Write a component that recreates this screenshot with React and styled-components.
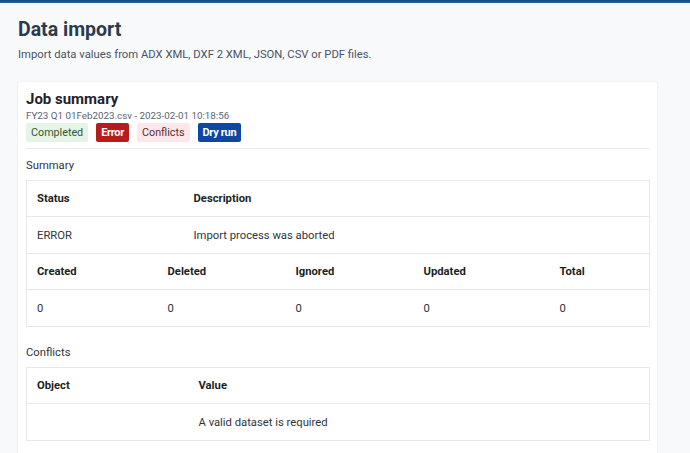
import React from "react";
import styled, { createGlobalStyle } from "styled-components";

const GlobalStyle = createGlobalStyle`
  html, body {
    margin: 0;
    padding: 0;
    background: #f8f9fb;
    font-family: Roboto, "Liberation Sans", sans-serif;
  }
`;

const TopBar = styled.div`
  height: 3px;
  background: linear-gradient(#1b4a78, #2c6398);
`;

const Page = styled.div`
  padding: 15px 33px 0 18px;
`;

const Title = styled.h1`
  margin: 0;
  font-size: 19.5px;
  line-height: 24px;
  font-weight: 700;
  color: #2c3a4d;
`;

const Subtitle = styled.p`
  margin: 6px 0 20px;
  font-size: 11.25px;
  line-height: 14px;
  color: #4a5463;
`;

const Card = styled.div`
  background: #fff;
  border-radius: 3px;
  box-shadow: 0 0 2px rgba(0, 0, 0, 0.12);
  padding: 8px 7px 20px 8px;
`;

const CardTitle = styled.h2`
  margin: 0;
  font-size: 15px;
  line-height: 18px;
  font-weight: 700;
  color: #1f2329;
`;

const FileLine = styled.div`
  margin-top: 2px;
  font-size: 9.8px;
  line-height: 12px;
  color: #5b6470;
`;

const Badges = styled.div`
  display: flex;
  gap: 8px;
  margin-top: 1px;
`;

const badgeColors = {
  completed: { bg: "#e6f4e7", fg: "#2f5a32", weight: 400 },
  error: { bg: "#b71c1c", fg: "#fff", weight: 700 },
  conflicts: { bg: "#fde7ea", fg: "#5e2a2e", weight: 400 },
  dry: { bg: "#0d47a1", fg: "#fff", weight: 700 },
};

const Badge = styled.span`
  display: inline-flex;
  align-items: center;
  height: 19px;
  padding: 0 5px;
  border-radius: 2px;
  background: ${(p) => badgeColors[p.$kind].bg};
  color: ${(p) => badgeColors[p.$kind].fg};
  font-weight: ${(p) => badgeColors[p.$kind].weight};
  font-size: ${(p) => (badgeColors[p.$kind].weight === 700 ? "11px" : "10.75px")};
  letter-spacing: ${(p) => (badgeColors[p.$kind].weight === 700 ? "-0.3px" : "0")};
`;

const Divider = styled.hr`
  border: 0;
  border-top: 1px solid #e8eaee;
  margin: 6px 0 0;
`;

const SectionTitle = styled.h3`
  margin: ${(p) => (p.$first ? "10px 0 7px" : "19px 0 7px")};
  font-size: 11.25px;
  line-height: 14px;
  font-weight: 400;
  color: #2e3440;
`;

const Table = styled.table`
  width: 100%;
  border-collapse: collapse;
  table-layout: fixed;
  border: 1px solid #e6e8eb;
  border-top: ${(p) => (p.$joined ? "none" : "1px solid #e6e8eb")};
  font-size: 11.25px;
`;

const Th = styled.th`
  text-align: left;
  font-weight: 700;
  color: #1c1f24;
  height: 35px;
  padding: 0 10px;
  border-bottom: 1px solid #e6e8eb;
`;

const Td = styled.td`
  color: #30353c;
  height: 36px;
  padding: 0 10px;
  border-bottom: 1px solid #e6e8eb;
`;

export default function App() {
  return (
    <>
      <GlobalStyle />
      <TopBar />
      <Page>
        <Title>Data import</Title>
        <Subtitle>
          Import data values from ADX XML, DXF 2 XML, JSON, CSV or PDF files.
        </Subtitle>
        <Card>
          <CardTitle>Job summary</CardTitle>
          <FileLine>FY23 Q1 01Feb2023.csv - 2023-02-01 10:18:56</FileLine>
          <Badges>
            <Badge $kind="completed">Completed</Badge>
            <Badge $kind="error">Error</Badge>
            <Badge $kind="conflicts">Conflicts</Badge>
            <Badge $kind="dry">Dry run</Badge>
          </Badges>
          <Divider />
          <SectionTitle $first>Summary</SectionTitle>
          <Table>
            <colgroup>
              <col style={{ width: 157 }} />
              <col />
            </colgroup>
            <thead>
              <tr>
                <Th>Status</Th>
                <Th>Description</Th>
              </tr>
            </thead>
            <tbody>
              <tr>
                <Td>ERROR</Td>
                <Td>Import process was aborted</Td>
              </tr>
            </tbody>
          </Table>
          <Table $joined>
            <colgroup>
              <col style={{ width: 131 }} />
              <col style={{ width: 128 }} />
              <col style={{ width: 128 }} />
              <col style={{ width: 136 }} />
              <col />
            </colgroup>
            <thead>
              <tr>
                <Th>Created</Th>
                <Th>Deleted</Th>
                <Th>Ignored</Th>
                <Th>Updated</Th>
                <Th>Total</Th>
              </tr>
            </thead>
            <tbody>
              <tr>
                <Td>0</Td>
                <Td>0</Td>
                <Td>0</Td>
                <Td>0</Td>
                <Td>0</Td>
              </tr>
            </tbody>
          </Table>
          <SectionTitle>Conflicts</SectionTitle>
          <Table>
            <colgroup>
              <col style={{ width: 162 }} />
              <col />
            </colgroup>
            <thead>
              <tr>
                <Th>Object</Th>
                <Th>Value</Th>
              </tr>
            </thead>
            <tbody>
              <tr>
                <Td></Td>
                <Td>A valid dataset is required</Td>
              </tr>
            </tbody>
          </Table>
        </Card>
      </Page>
    </>
  );
}
